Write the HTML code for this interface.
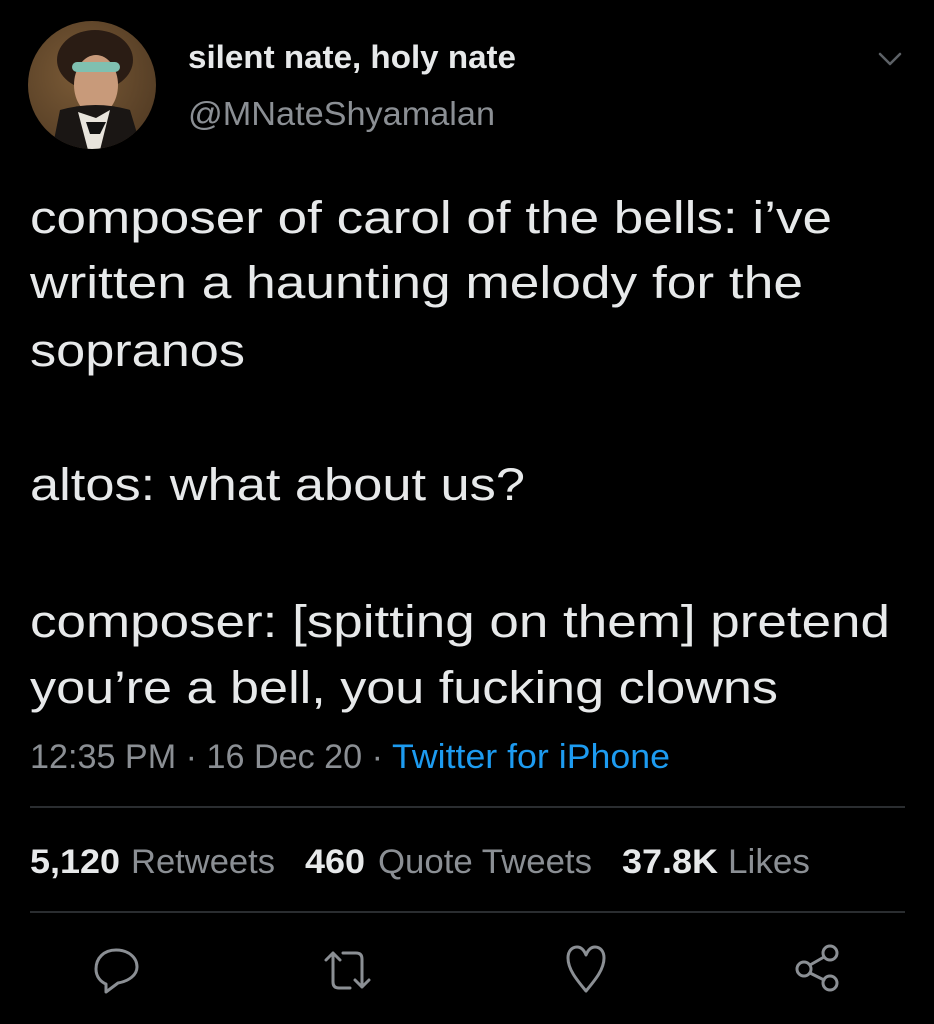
<!DOCTYPE html>
<html><head><meta charset="utf-8"><style>
html,body{margin:0;padding:0;background:#000;width:934px;height:1024px;overflow:hidden}
svg{display:block}
text{font-family:"Liberation Sans",sans-serif}
</style></head><body>
<svg width="934" height="1024" viewBox="0 0 934 1024" xmlns="http://www.w3.org/2000/svg">
<rect width="934" height="1024" fill="#000"/>
<defs>
<clipPath id="av"><circle cx="92" cy="85" r="64"/></clipPath>
<radialGradient id="bg" cx="0.4" cy="0.4" r="0.7"><stop offset="0" stop-color="#7a5a36"/><stop offset="1" stop-color="#4a3520"/></radialGradient>
</defs>
<g clip-path="url(#av)">
<rect x="20" y="15" width="150" height="150" fill="url(#bg)"/>
<ellipse cx="95" cy="60" rx="38" ry="30" fill="#2a1c14"/>
<ellipse cx="96" cy="85" rx="22" ry="30" fill="#c89a7a"/>
<rect x="72" y="62" width="48" height="10" rx="5" fill="#7fc0b0"/>
<path d="M50 160 L60 110 Q96 100 130 110 L145 160 Z" fill="#1a1614"/>
<path d="M78 112 L96 118 L110 110 L100 150 L88 150 Z" fill="#e8e4dc"/>
<path d="M86 122 L106 122 L100 134 L90 134 Z" fill="#111"/>
</g>
<text x="188" y="68" font-size="32" font-weight="bold" fill="#e7e9ea" textLength="328" lengthAdjust="spacingAndGlyphs">silent nate, holy nate</text>
<text x="188" y="125" font-size="33" fill="#8b8f94" textLength="307" lengthAdjust="spacingAndGlyphs">@MNateShyamalan</text>
<path d="M880 54 L890 64 L900 54" fill="none" stroke="#5d6166" stroke-width="2.5" stroke-linecap="round" stroke-linejoin="round"/>
<g font-size="45" fill="#e7e9ea">
<text x="30" y="233" textLength="802" lengthAdjust="spacingAndGlyphs">composer of carol of the bells: i’ve</text>
<text x="30" y="298" textLength="773" lengthAdjust="spacingAndGlyphs">written a haunting melody for the</text>
<text x="30" y="366" textLength="215" lengthAdjust="spacingAndGlyphs">sopranos</text>
<text x="30" y="500" textLength="495" lengthAdjust="spacingAndGlyphs">altos: what about us?</text>
<text x="30" y="637" textLength="860" lengthAdjust="spacingAndGlyphs">composer: [spitting on them] pretend</text>
<text x="30" y="703" textLength="748" lengthAdjust="spacingAndGlyphs">you’re a bell, you fucking clowns</text>
</g>
<text x="30" y="768" font-size="34" fill="#8b8f94" textLength="353" lengthAdjust="spacingAndGlyphs">12:35 PM · 16 Dec 20 ·</text>
<text x="392" y="768" font-size="34" fill="#1d9bf0" textLength="278" lengthAdjust="spacingAndGlyphs">Twitter for iPhone</text>
<rect x="30" y="806" width="875" height="2" fill="#2a2d30"/>
<g font-size="34">
<text x="30" y="873" font-weight="bold" fill="#e7e9ea" textLength="90" lengthAdjust="spacingAndGlyphs">5,120</text>
<text x="131" y="873" fill="#8b8f94" textLength="144" lengthAdjust="spacingAndGlyphs">Retweets</text>
<text x="305" y="873" font-weight="bold" fill="#e7e9ea" textLength="60" lengthAdjust="spacingAndGlyphs">460</text>
<text x="378" y="873" fill="#8b8f94" textLength="214" lengthAdjust="spacingAndGlyphs">Quote Tweets</text>
<text x="622" y="873" font-weight="bold" fill="#e7e9ea" textLength="96" lengthAdjust="spacingAndGlyphs">37.8K</text>
<text x="728" y="873" fill="#8b8f94" textLength="82" lengthAdjust="spacingAndGlyphs">Likes</text>
</g>
<rect x="30" y="911" width="875" height="2" fill="#2a2d30"/>
<g fill="none" stroke="#8b8f94" stroke-width="3" stroke-linecap="round" stroke-linejoin="round">
<path d="M116 950 C104 950 96 958 96 969 C96 977 101 982 106 984 L106 992 L118 983 C129 981 137 975 137 967 C137 957 128 950 116 950 Z"/>
<path d="M326 960 L333 953 L340 960 M333 953 L333 982 Q333 988 339 988 L350 988"/>
<path d="M343 953 L356 953 Q362 953 362 959 L362 987 M355 980 L362 987 L369 980"/>
<path d="M586 991 C576 979 568 969 568 958 C568 951 572 947 577 947 C581 947 584 950 586 955 C588 950 591 947 595 947 C600 947 604 951 604 958 C604 969 596 979 586 991 Z"/>
<circle cx="804" cy="969" r="7"/>
<circle cx="830" cy="953" r="7"/>
<circle cx="830" cy="983" r="7"/>
<path d="M810 965 L824 957 M810 973 L824 980"/>
</g>
</svg>
</body></html>
